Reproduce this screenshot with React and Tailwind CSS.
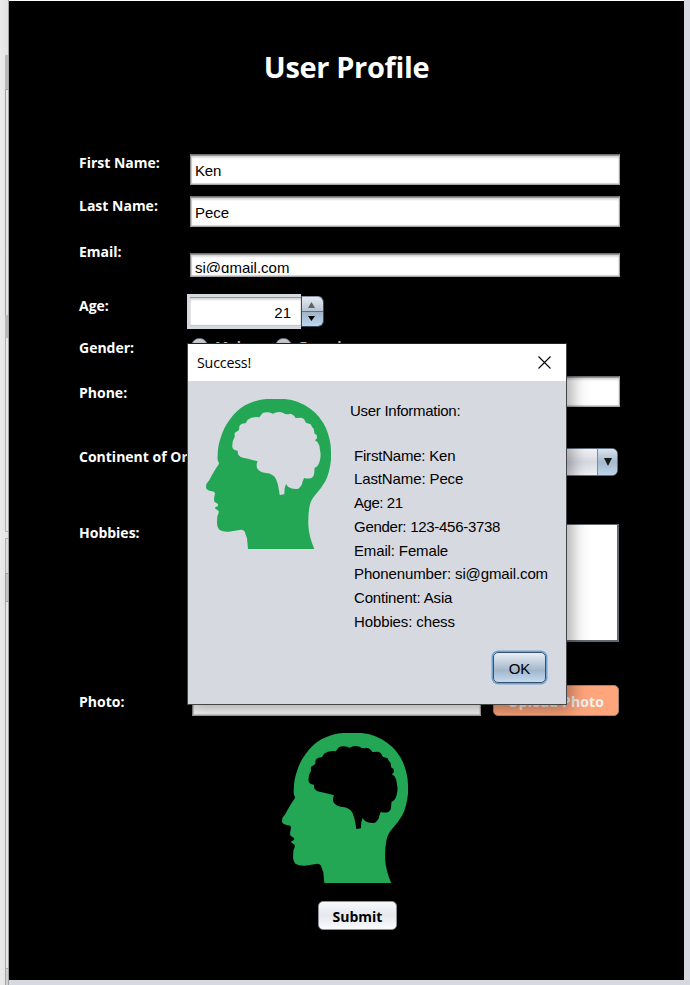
const labelFont = "font-['Open_Sans','Noto_Sans',sans-serif] font-bold";
const bodyFont = "font-['Liberation_Sans',Arial,sans-serif]";

function Row({ label, height, offset, children }) {
  return (
    <div className={`flex items-start ${height}`}>
      <div
        className={`w-[111px] shrink-0 whitespace-nowrap text-[14px] leading-5 text-white ${labelFont} ${offset}`}
      >
        {label}
      </div>
      {children}
    </div>
  );
}

function Field({ className, children }) {
  return (
    <div
      className={`flex items-center overflow-hidden border border-t-[#6e6e6e] border-r-[#a4a4a6] border-b-[#a4a4a6] border-l-[#8c8c8e] pl-1 text-[15px] text-black shadow-[inset_0_1px_1px_#8e8e8e,inset_0_3px_2px_#dedede,inset_1px_0_1px_#c8c8c8,inset_0_-1px_1px_#d0d0d0] ${bodyFont} ${className}`}
    >
      {children}
    </div>
  );
}

function Head({ className }) {
  return (
    <svg className={className} viewBox="48 42 375 450" preserveAspectRatio="none" fill="#23a755">
      <path
        fillRule="evenodd"
        d="M174 492 L171 460 L166 446 Q165 435 154 434 L116 440 Q98 441 88 434 Q80 426 81 412 L82 394 Q87 384 86 378 L75 370 Q73 366 84 363 L84 357 L73 350 L72 342 L75 325 Q74 319 66 319 Q50 316 48 308 L49 297 L58 285 L66 270 L78 250 Q87 240 87 233 Q81 227 83 212 Q83 182 93 155 Q102 126 119 104 Q138 77 165 61 Q200 43 230 42 L284 42 Q328 46 362 72 Q392 94 408 130 Q423 166 423 200 L423 224 Q419 262 406 289 Q394 310 375 331 Q361 347 358 368 Q354 390 355 422 Q357 454 373 492 Z M269 330 L283 328 L284 310 L288 297 L294 305 Q308 314 325 311 Q337 302 337 292 L342 279 Q353 282 362 280 Q373 275 373 260 L374 248 Q384 246 389 229 Q394 211 390 196 Q389 180 383 172 L375 166 L381 160 L380 149 L374 147 L371 131 Q365 126 362 118 L348 113 L342 102 L334 98 L317 99 Q310 87 300 86 Q288 91 279 83 Q263 78 249 86 Q232 79 218 84 L208 97 Q186 94 173 104 L167 115 Q153 114 148 124 L147 135 L134 144 L134 156 Q126 168 127 185 Q128 195 143 197 L144 208 Q149 217 163 219 L177 222 L203 229 Q198 237 201 249 Q209 263 228 264 Q249 266 258 282 Q265 298 267 316 Z"
      />
    </svg>
  );
}

function Spinner() {
  return (
    <div className="mt-1 -ml-[3px] flex items-start">
      <div className="h-[35px] w-[114px] bg-[#d6d9e0] pt-[3px] pb-[2px] pl-[3px]">
        <div
          className={`flex h-[29px] items-center justify-end bg-white pt-[3px] pr-[10px] text-[15px] text-black shadow-[inset_0_1px_1px_#8e8e92,inset_0_3px_2px_#dedede,inset_0_-1px_1px_#c4c4c8] ${bodyFont}`}
        >
          21
        </div>
      </div>
      <div className="mt-[2px] flex h-[31px] w-[23px] flex-col overflow-hidden rounded-r-md border border-[#34495f] border-t-[#8794a3]">
        <div className="flex h-[14px] items-center justify-center bg-linear-to-b from-[#e6ebf2] to-[#b8c4d2]">
          <svg className="mt-[2px] -ml-[2px] h-[6px] w-[7px]" viewBox="0 0 7 6"><path d="M3.5 0 7 6H0z" fill="#606468" /></svg>
        </div>
        <div className="flex grow items-center justify-center border-t border-[#5a7590] bg-linear-to-b from-[#9fb4c9] to-[#bfd6ec]">
          <svg className="-mt-[1px] -ml-[2px] h-[5px] w-[7px]" viewBox="0 0 7 5"><path d="M0 0H7L3.5 5z" fill="#000" /></svg>
        </div>
      </div>
    </div>
  );
}

function Radio({ label, className }) {
  return (
    <div className={`flex items-start gap-[7px] ${className}`}>
      <span className="mt-px size-[17px] rounded-full border border-[#8a95a3] bg-linear-to-b from-[#e8e8ea] to-[#c8ccd4]" />
      <span className={`text-[14px] leading-5 text-[#d0d0d0] ${labelFont}`}>{label}</span>
    </div>
  );
}

function Dialog() {
  const lines = [
    ["FirstName: Ken", "tracking-[-0.2px]"],
    ["LastName: Pece", "tracking-[-0.12px]"],
    ["Age: 21", "tracking-[-0.45px]"],
    ["Gender: 123-456-3738", "tracking-[-0.28px]"],
    ["Email: Female", "tracking-[-0.14px]"],
    ["Phonenumber: si@gmail.com", "tracking-[-0.12px]"],
    ["Continent: Asia", "tracking-[-0.18px]"],
    ["Hobbies: chess", "tracking-[-0.12px]"],
  ];
  return (
    <div className="absolute top-[343px] left-[187px] flex h-[362px] w-[380px] flex-col border border-[#45464a] border-t-[#222] bg-[#d6d9e0] text-black shadow-[3px_3px_16px_2px_rgba(0,0,0,0.35)]">
      <div className="flex h-[37px] shrink-0 items-center justify-between bg-white pr-[15px] pl-[9px]">
        <span className="origin-left scale-x-[0.95] font-['Open_Sans','Noto_Sans',sans-serif] text-[15px] tracking-[-0.2px]">Success!</span>
        <svg className="-mt-[1px] h-[13px] w-[13px]" viewBox="0 0 13 13"><path d="M.5.5l12 12M12.5.5l-12 12" stroke="#000" strokeWidth="1.1" /></svg>
      </div>
      <div className="flex items-start pt-[18px] pl-[18px]">
        <Head className="h-[150px] w-[125px] shrink-0" />
        <div className={`ml-[19px] text-[15px] whitespace-nowrap ${bodyFont}`}>
          <div className="h-[44.6px] leading-6 tracking-[-0.28px]">User Information:</div>
          <div className="pl-1">
            {lines.map(([line, tracking]) => (
              <div key={line} className={`h-[23.75px] leading-6 ${tracking}`}>{line}</div>
            ))}
          </div>
        </div>
      </div>
      <div className="mt-[18.4px] flex justify-end pr-[20px]">
        <div
          className={`flex h-[31px] w-[53px] items-center justify-center rounded-[5px] border border-[#34506c] bg-linear-to-b from-[#e9eef4] via-[#a3b7cb] via-60% to-[#c3daf0] pt-[3px] text-[15px] shadow-[0_0_0_1.5px_#73a4d1] ${bodyFont}`}
        >
          OK
        </div>
      </div>
    </div>
  );
}

export default function App() {
  return (
    <div className="relative flex h-[985px] w-[690px] overflow-hidden bg-[#d6d9e0]">
      <div className="flex w-[9px] shrink-0 bg-linear-to-r from-[#ebebeb] to-[#e2e2e2]">
        <div className="ml-[5px] flex w-[4px] flex-col border-r border-[#a2a2a2]">
          <div className="h-[55px]" />
          <div className="h-[34px] bg-[#b9b9b9]" />
          <div className="h-[226px] border-t border-l border-[#a0a0a0] bg-[#e4e4e4]" />
          <div className="h-[23px] bg-[#b9b9b9]" />
          <div className="h-[194px] border-b border-l border-[#b0b0b0] bg-[#e8e8e8]" />
          <div className="h-[6px]" />
          <div className="h-[35px] border-t border-l border-[#b0b0b0] bg-[#dcdcdc]" />
          <div className="h-[29px] border border-r-0 border-[#a0a0a0] bg-[#c4c4c4]" />
          <div className="h-[367px] border-b border-l border-[#a8a8a8] bg-[#e6e6e6]" />
          <div className="grow border-l border-[#a8a8a8] bg-[#cfcfcf]" />
        </div>
      </div>
      <div className="flex h-[980px] w-[675px] flex-col border-t border-white bg-black">
        <h1 className={`h-[145px] pt-[46px] text-center text-[29px] leading-10 tracking-[-0.35px] text-white ${labelFont}`}>
          User Profile
        </h1>
        <div className="flex flex-col pl-[70px]">
          <Row label="First Name:" height="h-[44px]" offset="mt-[7px]">
            <Field className="mt-[8px] h-[31px] w-[430px] bg-white"><span className="mt-[3px] tracking-[-0.2px]">Ken</span></Field>
          </Row>
          <Row label="Last Name:" height="h-[50px]" offset="mt-[6px]">
            <Field className="mt-[6px] h-[31px] w-[430px] bg-white"><span className="mt-[3px]">Pece</span></Field>
          </Row>
          <Row label="Email:" height="h-[50px]" offset="mt-[2px]">
            <Field className="mt-[13px] h-[24px] w-[430px] bg-white">
              <span className="mt-[2px] h-[13px] overflow-hidden leading-[16px]">si@gmail.com</span>
            </Field>
          </Row>
          <Row label="Age:" height="h-[45px]" offset="mt-[6px]"><Spinner /></Row>
          <Row label="Gender:" height="h-[37px]" offset="mt-[3px]">
            <Radio label="Male" className="mt-[2px] ml-[1px]" />
            <Radio label="Female" className="mt-[2px] ml-[26px]" />
          </Row>
          <Row label="Phone:" height="h-[58px]" offset="mt-[11px]">
            <Field className="mt-1 h-[31px] w-[430px] bg-white">123-456-3738</Field>
          </Row>
          <Row label="Continent of Origin:" height="h-[80px]" offset="mt-[17px]">
            <div className="mt-[18px] ml-[2px] flex h-[28px] w-[426px] justify-end overflow-hidden rounded-md border border-[#5f6f80] bg-linear-to-b from-[#f3f3f6] via-[#d6d9e0] to-[#eef0f5]">
              <div className="flex w-[20px] items-center justify-center border-l border-[#7390ab] bg-linear-to-b from-[#dce5ee] via-[#a4b9cd] to-[#bdd5eb]">
                <svg className="h-[8px] w-[8px]" viewBox="0 0 8 8"><path d="M0 0H8L4 8z" fill="#181818" /></svg>
              </div>
            </div>
          </Row>
          <Row label="Hobbies:" height="h-[160px]" offset="mt-[13px]">
            <div className="mt-[14px] h-[118px] w-[429px] border border-r-2 border-b-2 border-[#626870] bg-white" />
          </Row>
          <Row label="Photo:" height="h-[63px]" offset="mt-[22px]">
            <Field className="mt-[15px] ml-[2px] h-[31px] w-[289px] bg-white" />
            <div className={`mt-[15px] ml-[12px] flex h-[31px] w-[126px] items-center justify-center rounded-[5px] border border-[#a48370] bg-[#ffa57b] text-[14px] tracking-[0.1px] whitespace-nowrap text-[#f2f2f2] ${labelFont}`}>
              <span className="mt-[2px]">Upload Photo</span>
            </div>
          </Row>
        </div>
        <Head className="ml-[273px] h-[150px] w-[126px]" />
        <div className={`mt-[18px] ml-[309px] flex h-[29px] w-[79px] items-center justify-center rounded-[5px] border border-[#8b8f98] bg-linear-to-b from-[#f8f9fc] via-[#e6e8ef] to-[#fafbff] text-[14px] text-black ${labelFont}`}>
          <span className="mt-[2px]">Submit</span>
        </div>
      </div>
      <Dialog />
    </div>
  );
}
